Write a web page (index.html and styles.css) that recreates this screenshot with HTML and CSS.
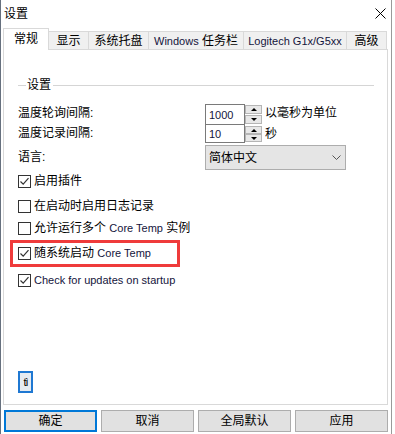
FILE: index.html
```html
<!DOCTYPE html>
<html lang="zh-CN">
<head>
<meta charset="utf-8">
<title>设置</title>
<link rel="stylesheet" href="styles.css">
</head>
<body>
<div class="window">
  <div class="titlebar">
    <span class="title">设置</span>
    <svg class="close" width="11" height="11" viewBox="0 0 11 11"><path d="M0.5 0.5 L10.5 10.5 M10.5 0.5 L0.5 10.5" stroke="#000" stroke-width="1" fill="none"/></svg>
  </div>
  <div class="tabs">
    <div class="tab sel">常规</div>
    <div class="tab">显示</div>
    <div class="tab">系统托盘</div>
    <div class="tab"><span class="lat">Windows</span>&nbsp;任务栏</div>
    <div class="tab"><span class="lat">Logitech G1x/G5xx</span></div>
    <div class="tab">高级</div>
  </div>
  <div class="panel">
    <div class="group"><span class="gline short"></span><span class="legend">设置</span><span class="gline long"></span></div>
    <div class="form">
      <div class="lbl up">温度轮询间隔:</div>
      <div class="ctl">
        <div class="spinner">
          <div class="field lat">1000</div>
          <div class="spin"><span class="sb"><i class="tri-up"></i></span><span class="sb"><i class="tri-down"></i></span></div>
        </div>
        <span class="unit">以毫秒为单位</span>
      </div>
      <div class="lbl up">温度记录间隔:</div>
      <div class="ctl">
        <div class="spinner second">
          <div class="field lat">10</div>
          <div class="spin"><span class="sb"><i class="tri-up"></i></span><span class="sb"><i class="tri-down"></i></span></div>
        </div>
        <span class="unit">秒</span>
      </div>
      <div class="lbl lang">语言:</div>
      <div class="ctl lang">
        <div class="combo"><span>简体中文</span><svg width="9" height="5" viewBox="0 0 9 5"><path d="M0.5 0.5 L4.5 4.5 L8.5 0.5" stroke="#555" fill="none" stroke-width="1"/></svg></div>
      </div>
    </div>
    <div class="checks">
      <div class="chk"><span class="box on"><svg width="11" height="11" viewBox="0 0 11 11"><path d="M1.5 5.5 L4.2 8.2 L9.5 2.2" stroke="#333" stroke-width="1.2" fill="none"/></svg></span>启用插件</div>
      <div class="chk"><span class="box"></span>在启动时启用日志记录</div>
      <div class="chk"><span class="box"></span>允许运行多个&nbsp;<span class="lat">Core Temp</span>&nbsp;实例</div>
      <div class="chk marked"><span class="box on"><svg width="11" height="11" viewBox="0 0 11 11"><path d="M1.5 5.5 L4.2 8.2 L9.5 2.2" stroke="#333" stroke-width="1.2" fill="none"/></svg></span>随系统启动&nbsp;<span class="lat">Core Temp</span><span class="redbox"></span></div>
      <div class="chk"><span class="box on"><svg width="11" height="11" viewBox="0 0 11 11"><path d="M1.5 5.5 L4.2 8.2 L9.5 2.2" stroke="#333" stroke-width="1.2" fill="none"/></svg></span><span class="lat">Check for updates on startup</span></div>
    </div>
    <div class="icon">tì</div>
  </div>
  <div class="buttons">
    <div class="btn def">确定</div>
    <div class="btn">取消</div>
    <div class="btn">全局默认</div>
    <div class="btn">应用</div>
  </div>
</div>
</body>
</html>
```

FILE: styles.css
```css
html, body {
  margin: 0;
  padding: 0;
  background: #ffffff;
}
body {
  font-family: "Liberation Sans", "Noto Sans CJK SC", sans-serif;
  font-size: 12px;
  line-height: 14px;
  color: #000;
}
.lat {
  font-family: "Liberation Sans", sans-serif;
  font-size: 11px;
  color: #14143c;
}
.window {
  width: 392px;
  height: 434px;
  box-sizing: border-box;
  border-left: 1px solid #66707e;
  border-right: 1px solid #9a9a9a;
  background: #fff;
  display: flex;
  flex-direction: column;
}
.titlebar {
  height: 28px;
  display: flex;
  align-items: center;
  justify-content: space-between;
  padding: 0 5px 1px 3px;
  box-sizing: border-box;
}
.title { font-size: 12px; }
.close { display: block; }
.tabs {
  height: 22px;
  display: flex;
  align-items: flex-end;
  padding-left: 2px;
  position: relative;
  z-index: 1;
}
.tab {
  height: 18px;
  margin-bottom: 1px;
  min-width: 41px;
  padding: 0 4px;
  box-sizing: border-box;
  border: 1px solid #d9d9d9;
  border-bottom: none;
  background: #f0f0f0;
  display: flex;
  align-items: center;
  justify-content: center;
  margin-left: -1px;
  white-space: nowrap;
}
.tab.sel {
  height: 22px;
  margin-bottom: 0;
  min-width: 46px;
  margin-left: 0;
  background: #fff;
  padding-bottom: 1px;
}
.tab:nth-child(3) { min-width: 61px; }
.tab:nth-child(4) { min-width: 96px; }
.tab:nth-child(5) { min-width: 104px; }
.panel {
  margin-top: -1px;
  margin-left: 2px;
  width: 385px;
  height: 356px;
  box-sizing: border-box;
  border: 1px solid #d9d9d9;
  background: #fff;
  padding: 28px 13px 0 14px;
}
.group {
  height: 14px;
  display: flex;
  align-items: center;
}
.gline {
  height: 1px;
  background: #d5d5d5;
}
.gline.short { width: 8px; }
.gline.long { flex: 1; }
.legend { padding: 0 2px 0 1px; }
.form {
  margin-top: 12px;
  display: grid;
  grid-template-columns: 187px 1fr;
  grid-template-rows: 21px 18px 25px;
}
.lbl {
  display: flex;
  align-items: center;
}
.lbl.up { padding-bottom: 3px; }
.ctl {
  display: flex;
  align-items: flex-start;
}
.lbl.lang, .ctl.lang { margin-top: 2px; }
.spinner {
  display: flex;
  height: 21px;
}
.field {
  width: 40px;
  height: 21px;
  box-sizing: border-box;
  border: 1px solid #7a7a7a;
  padding: 0 0 0 3px;
  display: flex;
  align-items: center;
  background: #fff;
}
.spinner.second, .spinner.second .field { height: 18px; }
.spinner.second .field { border-top: none; }
.spin {
  width: 17px;
  display: flex;
  flex-direction: column;
  justify-content: space-between;
  padding: 1px 0;
  box-sizing: border-box;
}
.sb {
  height: 9px;
  box-sizing: border-box;
  border: 1px solid #b5b5b5;
  background: #e8e8e8;
  display: flex;
  align-items: center;
  justify-content: center;
}
.spinner.second .sb { height: 8px; }
.tri-up, .tri-down {
  width: 0;
  height: 0;
  border-left: 3px solid transparent;
  border-right: 3px solid transparent;
}
.tri-up { border-bottom: 3px solid #000; }
.tri-down { border-top: 3px solid #000; }
.unit {
  margin-left: 3px;
  line-height: 19px;
}
.combo {
  width: 141px;
  height: 25px;
  box-sizing: border-box;
  border: 1px solid #adadad;
  background: #e5e5e5;
  display: flex;
  align-items: center;
  justify-content: space-between;
  padding: 0 4px 0 3px;
}
.checks {
  margin-top: 5px;
}
.chk {
  height: 16px;
  display: flex;
  align-items: center;
  white-space: nowrap;
}
.chk:nth-child(2) { margin-top: 9px; }
.chk:nth-child(3) { margin-top: 6px; }
.chk:nth-child(4) { margin-top: 9px; }
.chk:nth-child(5) { margin-top: 11px; }
.box {
  width: 13px;
  height: 13px;
  box-sizing: border-box;
  border: 1px solid #333;
  background: #fff;
  margin-right: 3px;
  display: flex;
  align-items: center;
  justify-content: center;
  flex: none;
}
.box svg { display: block; }
.marked { position: relative; }
.redbox {
  position: absolute;
  left: -8px;
  top: -5px;
  width: 170px;
  height: 27px;
  box-sizing: border-box;
  border: 3px solid #ef3b3b;
}
.icon {
  margin-top: 83px;
  width: 15px;
  height: 22px;
  box-sizing: border-box;
  border: 2px solid #1f78d2;
  background: #e6ebf1;
  font-size: 11px;
  line-height: 18px;
  text-align: center;
  letter-spacing: -1px;
  overflow: hidden;
}
.buttons {
  margin-top: 5px;
  margin-left: 3px;
  display: flex;
  gap: 4px;
}
.btn {
  width: 93px;
  height: 22px;
  box-sizing: border-box;
  border: 1px solid #adadad;
  background: #e1e1e1;
  display: flex;
  align-items: center;
  justify-content: center;
}
.btn.def { border: 2px solid #0078d7; }
```
